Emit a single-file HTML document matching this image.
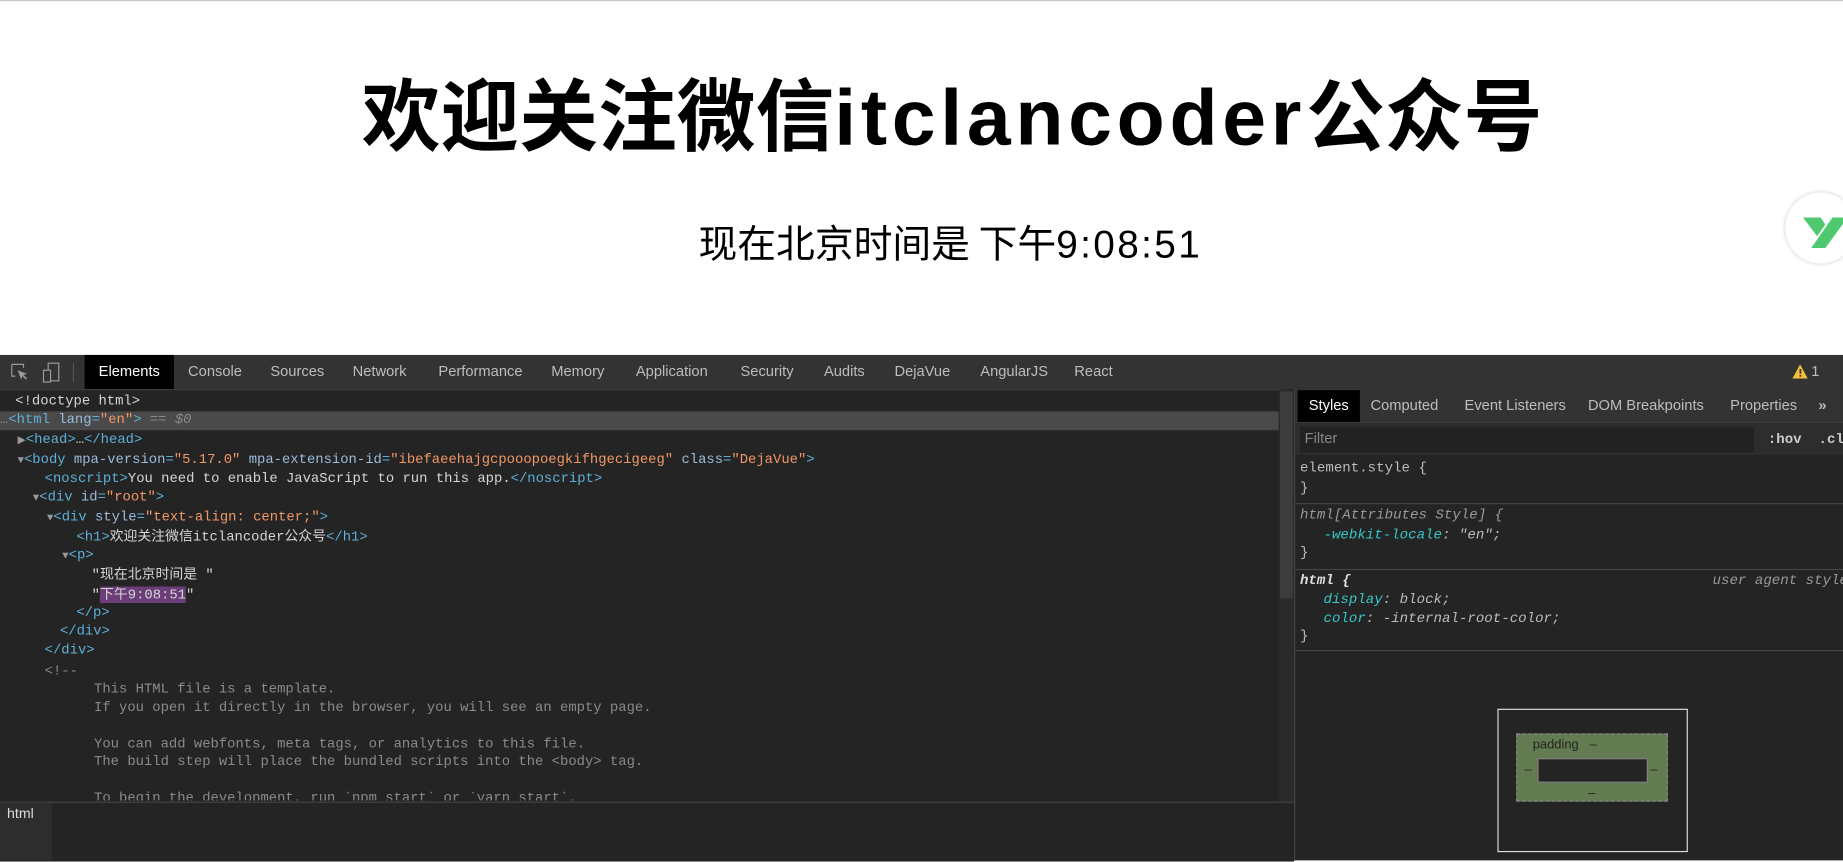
<!DOCTYPE html>
<html><head><meta charset="utf-8">
<style>
html,body{margin:0;padding:0;width:1843px;height:822px;overflow:hidden;background:#fff}
#s{position:absolute;left:0;top:0;width:1568px;height:700px;transform:scale(1.17538);transform-origin:0 0;font-family:"Liberation Sans","Noto Sans CJK SC",sans-serif}
.a{position:absolute;white-space:pre}
.cjk{font-family:"Noto Sans CJK SC",sans-serif}
#dev{position:absolute;left:0;top:302px;width:1568px;height:430px;background:#242424}
.tabs{position:absolute;left:0;top:0;width:1568px;height:29px;background:#333;border-bottom:1px solid #3d3d3d}
.tab{position:absolute;top:0;height:29px;line-height:29px;font-size:12.5px;color:#bdbdbd}
.code{font-family:"Liberation Mono",monospace;font-size:11.8px;color:#d6d6d6;line-height:16px}
.t{color:#5db0d7}.n{color:#9bbbdc}.v{color:#f29766}.c{color:#8a8a8a}
.tri{color:#9a9a9a;font-size:9px}
.st{font-family:"Liberation Mono",monospace;font-size:12px;color:#bcbcbc;line-height:16px}
.k{color:#35c7c7}
</style></head><body>
<div id="s">
<div class="a" style="left:0;top:0;width:1568px;height:1px;background:#c8c8c8"></div>
<div class="a" style="left:0;width:1620px;top:61px;line-height:67px;text-align:center;font-weight:bold;font-size:67px;color:#000"><span class="cjk">欢迎关注微信</span><span style="letter-spacing:4px">itclancoder</span><span class="cjk">公众号</span></div>
<div class="a" style="left:0;width:1617px;top:189px;line-height:32px;text-align:center;font-size:33px;color:#000"><span class="cjk">现在北京时间是 下午</span><span style="letter-spacing:2px">9:08:51</span></div>
<div class="a" style="left:1518px;top:163px;width:60px;height:60px;border-radius:50%;background:#fff;box-shadow:0 0 3px #ddd;border:1px solid #eee"></div>
<svg class="a" style="left:1530px;top:180px" width="38" height="36" viewBox="1530 180 38 36"><path d="M1534 185 H1549 L1553 191 L1546 201 Z" fill="#4ec970"/><path d="M1559 185 H1572 L1553 211 H1541 Z" fill="#4ec970"/></svg>

<div id="dev">
 <div class="tabs">
  <svg class="a" style="left:9px;top:7px" width="16" height="16"><path d="M1 1h10v3M1 1v10h3" stroke="#9a9a9a" fill="none"/><path d="M6 6l8 3-3 1 3 3-1 1-3-3-1 3z" fill="#9a9a9a"/></svg>
  <svg class="a" style="left:36px;top:6px" width="16" height="18"><rect x="5" y="1" width="9" height="15" stroke="#9a9a9a" fill="none"/><rect x="1" y="7" width="6" height="10" stroke="#9a9a9a" fill="#333"/></svg>
  <div class="a" style="left:62px;top:7px;width:1px;height:16px;background:#555"></div>
  <div class="tab" style="left:72px;width:76px;background:#000;color:#fff;text-align:center">Elements</div>
  <div class="tab" style="left:160px">Console</div>
  <div class="tab" style="left:230px">Sources</div>
  <div class="tab" style="left:300px">Network</div>
  <div class="tab" style="left:373px">Performance</div>
  <div class="tab" style="left:469px">Memory</div>
  <div class="tab" style="left:541px">Application</div>
  <div class="tab" style="left:630px">Security</div>
  <div class="tab" style="left:701px">Audits</div>
  <div class="tab" style="left:761px">DejaVue</div>
  <div class="tab" style="left:834px">AngularJS</div>
  <div class="tab" style="left:914px">React</div>
  <svg class="a" style="left:1525px;top:8px" width="13" height="12"><path d="M6.5 0L13 12H0Z" fill="#f4c03a"/><rect x="6" y="4" width="1.5" height="4" fill="#333"/><rect x="6" y="9" width="1.5" height="1.5" fill="#333"/></svg>
  <div class="tab" style="left:1541px">1</div>
 </div>
 <div class="a" style="left:0;top:48px;width:1088px;height:16px;background:#4a4a4a"></div>
 <div class="a code" style="left:13px;top:31px">&lt;!doctype html&gt;</div>
 <div class="a code" style="left:0;top:47px"><span class="c">…</span><span class="t">&lt;html </span><span class="n">lang</span><span class="t">=</span><span class="v">"en"</span><span class="t">&gt;</span><span class="c"> == <i>$0</i></span></div>
 <div class="a code" style="left:15px;top:64px"><span class="tri">▶</span><span class="t">&lt;head&gt;</span>…<span class="t">&lt;/head&gt;</span></div>
 <div class="a code" style="left:15px;top:81px"><span class="tri">▼</span><span class="t">&lt;body </span><span class="n">mpa-version</span><span class="t">=</span><span class="v">"5.17.0"</span> <span class="n">mpa-extension-id</span><span class="t">=</span><span class="v">"ibefaeehajgcpooopoegkifhgecigeeg"</span> <span class="n">class</span><span class="t">=</span><span class="v">"DejaVue"</span><span class="t">&gt;</span></div>
 <div class="a code" style="left:38px;top:97px"><span class="t">&lt;noscript&gt;</span>You need to enable JavaScript to run this app.<span class="t">&lt;/noscript&gt;</span></div>
 <div class="a code" style="left:28px;top:113px"><span class="tri">▼</span><span class="t">&lt;div </span><span class="n">id</span><span class="t">=</span><span class="v">"root"</span><span class="t">&gt;</span></div>
 <div class="a code" style="left:40px;top:130px"><span class="tri">▼</span><span class="t">&lt;div </span><span class="n">style</span><span class="t">=</span><span class="v">"text-align: center;"</span><span class="t">&gt;</span></div>
 <div class="a code" style="left:65px;top:146px"><span class="t">&lt;h1&gt;</span><span class="cjk">欢迎关注微信</span>itclancoder<span class="cjk">公众号</span><span class="t">&lt;/h1&gt;</span></div>
 <div class="a code" style="left:53px;top:162px"><span class="tri">▼</span><span class="t">&lt;p&gt;</span></div>
 <div class="a code" style="left:78px;top:178px">"<span class="cjk">现在北京时间是</span> "</div>
 <div class="a code" style="left:78px;top:195px">"<span style="background:#6b3e7a"><span class="cjk">下午</span>9:08:51</span>"</div>
 <div class="a code" style="left:65px;top:211px"><span class="t">&lt;/p&gt;</span></div>
 <div class="a code" style="left:51px;top:227px"><span class="t">&lt;/div&gt;</span></div>
 <div class="a code" style="left:38px;top:243px"><span class="t">&lt;/div&gt;</span></div>
 <div class="a code c" style="left:38px;top:261px">&lt;!--</div>
 <div class="a code c" style="left:80px;top:276px">This HTML file is a template.</div>
 <div class="a code c" style="left:80px;top:292px">If you open it directly in the browser, you will see an empty page.</div>
 <div class="a code c" style="left:80px;top:323px">You can add webfonts, meta tags, or analytics to this file.</div>
 <div class="a code c" style="left:80px;top:338px">The build step will place the bundled scripts into the &lt;body&gt; tag.</div>
 <div class="a code c" style="left:80px;top:369px;height:10px;overflow:hidden">To begin the development, run `npm start` or `yarn start`.</div>
 <div class="a" style="left:0;top:380px;width:1101px;height:50px;background:#242424;border-top:1px solid #444"></div>
 <div class="a" style="left:0;top:381px;width:44px;height:49px;background:#2d2d2d"></div>
 <div class="a" style="left:6px;top:383px;font-size:12px;color:#ddd">html</div>
 <div class="a" style="left:1088px;top:29px;width:13px;height:351px;background:#2a2a2a"></div>
 <div class="a" style="left:1089px;top:31px;width:11px;height:176px;background:#3c3c3c"></div>
 <div class="a" style="left:1101px;top:29px;width:1px;height:401px;background:#444"></div>
 <div class="a" style="left:1102px;top:29px;width:466px;height:28px;background:#333;border-bottom:1px solid #3d3d3d"></div>
 <div class="tab" style="top:30px;left:1104px;width:53px;height:27px;line-height:27px;background:#000;color:#fff;text-align:center">Styles</div>
 <div class="tab" style="top:30px;height:27px;line-height:27px;left:1166px">Computed</div>
 <div class="tab" style="top:30px;height:27px;line-height:27px;left:1246px">Event Listeners</div>
 <div class="tab" style="top:30px;height:27px;line-height:27px;left:1351px">DOM Breakpoints</div>
 <div class="tab" style="top:30px;height:27px;line-height:27px;left:1472px">Properties</div>
 <div class="tab" style="top:30px;height:27px;line-height:27px;left:1547px;font-weight:bold">»</div>
 <div class="a" style="left:1102px;top:58px;width:466px;height:27px;background:#2d2d2d"></div>
 <div class="a" style="left:1106px;top:61px;width:386px;height:22px;background:#222"></div>
 <div class="a" style="left:1110px;top:64px;font-size:12.5px;color:#888">Filter</div>
 <div class="a st" style="left:1504px;top:64px;font-weight:bold;color:#ccc">:hov  .cls</div>
 <div class="a st" style="left:1106px;top:88px">element.style {</div>
 <div class="a st" style="left:1106px;top:105px">}</div>
 <div class="a" style="left:1102px;top:126px;width:466px;height:1px;background:#444"></div>
 <div class="a st" style="left:1106px;top:128px;font-style:italic;color:#999">html[Attributes Style] {</div>
 <div class="a st" style="left:1126px;top:145px;font-style:italic"><span class="k">-webkit-locale</span>: "en";</div>
 <div class="a st" style="left:1106px;top:160px">}</div>
 <div class="a" style="left:1102px;top:182px;width:466px;height:1px;background:#444"></div>
 <div class="a st" style="left:1106px;top:184px;font-style:italic;font-weight:bold;color:#ddd">html {</div>
 <div class="a st" style="left:1457px;top:184px;font-style:italic;color:#999">user agent style</div>
 <div class="a st" style="left:1126px;top:200px;font-style:italic"><span class="k">display</span>: block;</div>
 <div class="a st" style="left:1126px;top:216px;font-style:italic"><span class="k">color</span>: -internal-root-color;</div>
 <div class="a st" style="left:1106px;top:231px">}</div>
 <div class="a" style="left:1102px;top:251px;width:466px;height:1px;background:#444"></div>
 <div class="a" style="left:1274px;top:301px;width:160px;height:120px;border:1px solid #ddd"></div>
 <div class="a" style="left:1290px;top:322px;width:129px;height:58px;background:#627b51;border:1px dashed #888;box-sizing:border-box"></div>
 <div class="a" style="left:1304px;top:326px;font-size:11px;color:#222">padding   –</div>
 <div class="a" style="left:1308px;top:343px;width:94px;height:21px;background:#242424;border:1px solid #888;box-sizing:border-box"></div>
 <div class="a" style="left:1297px;top:347px;font-size:11px;color:#222">–</div>
 <div class="a" style="left:1404px;top:347px;font-size:11px;color:#222">–</div>
 <div class="a" style="left:1351px;top:367px;font-size:11px;color:#222">–</div>
</div>
</div>
</body></html>
